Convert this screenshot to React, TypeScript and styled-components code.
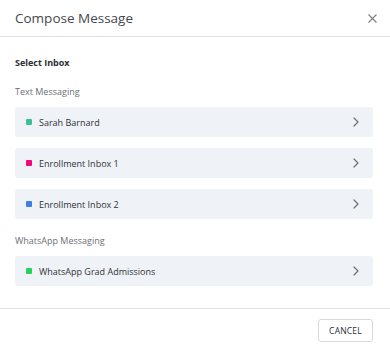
import React from "react";
import styled, { createGlobalStyle } from "styled-components";

const Global = createGlobalStyle`
  html, body { margin: 0; padding: 0; background: #fff; }
  body { font-family: "Open Sans", "Noto Sans", Arial, sans-serif; }
  * { box-sizing: border-box; }
`;

const Dialog = styled.div`
  width: 390px;
  height: 350px;
  background: #fff;
  display: flex;
  flex-direction: column;
`;

const Header = styled.div`
  height: 37px;
  border-bottom: 1px solid #dcdfe3;
  display: flex;
  align-items: center;
  justify-content: space-between;
  padding: 0 13px 0 15px;
`;

const Title = styled.h1`
  margin: 0;
  font-size: 13.5px;
  font-weight: 400;
  color: #45484d;
  line-height: 20px;
`;

const CloseButton = styled.button`
  border: 0;
  background: transparent;
  padding: 0;
  width: 10px;
  height: 10px;
  display: flex;
  align-items: center;
  justify-content: center;
  cursor: pointer;
`;

const Body = styled.div`
  padding: 19px 17px 22px 15px;
  display: flex;
  flex-direction: column;
  border-bottom: 1px solid #dcdfe3;
`;

const Heading = styled.div`
  font-size: 9px;
  font-weight: 700;
  color: #2b2e33;
  line-height: 14px;
`;

const GroupLabel = styled.div`
  font-size: 9px;
  color: #6b6f75;
  line-height: 14px;
  margin-top: 15px;
  margin-bottom: 8px;
`;

const List = styled.div`
  display: flex;
  flex-direction: column;
  gap: 11px;
`;

const Row = styled.div`
  height: 30px;
  background: #eff2f7;
  border-radius: 3px;
  display: flex;
  align-items: center;
  padding: 0 14px 0 11px;
  cursor: pointer;
`;

const Dot = styled.span<{ $color: string }>`
  width: 6px;
  height: 6px;
  border-radius: 1px;
  background: ${(p) => p.$color};
  margin-right: 7px;
  flex: none;
`;

const RowText = styled.span`
  font-size: 9px;
  color: #2f3237;
  flex: 1;
`;

const Footer = styled.div`
  display: flex;
  justify-content: flex-end;
  padding: 10px 17px 0 15px;
`;

const CancelButton = styled.button`
  height: 23px;
  width: 55px;
  background: #fff;
  border: 1px solid #d6d9de;
  border-radius: 3px;
  font-family: "Open Sans", sans-serif;
  font-size: 8.5px;
  color: #2b2e33;
  letter-spacing: 0.2px;
  padding: 0;
`;

const Chevron = () => (
  <svg width="6" height="10" viewBox="0 0 6 10" fill="none">
    <path d="M1 1l4 4-4 4" stroke="#6d7076" strokeWidth="1.2" strokeLinecap="round" strokeLinejoin="round" />
  </svg>
);

const groups = [
  {
    label: "Text Messaging",
    items: [
      { name: "Sarah Barnard", color: "#3cbf91" },
      { name: "Enrollment Inbox 1", color: "#f5067c" },
      { name: "Enrollment Inbox 2", color: "#3d7ee0" },
    ],
  },
  {
    label: "WhatsApp Messaging",
    items: [{ name: "WhatsApp Grad Admissions", color: "#27d15e" }],
  },
];

export default function App() {
  return (
    <>
      <Global />
      <Dialog>
        <Header>
          <Title>Compose Message</Title>
          <CloseButton aria-label="Close">
            <svg width="9" height="9" viewBox="0 0 9 9">
              <path d="M0.5 0.5l8 8M8.5 0.5l-8 8" stroke="#7a7d82" strokeWidth="1.1" />
            </svg>
          </CloseButton>
        </Header>
        <Body>
          <Heading>Select Inbox</Heading>
          {groups.map((g) => (
            <React.Fragment key={g.label}>
              <GroupLabel>{g.label}</GroupLabel>
              <List>
                {g.items.map((it) => (
                  <Row key={it.name}>
                    <Dot $color={it.color} />
                    <RowText>{it.name}</RowText>
                    <Chevron />
                  </Row>
                ))}
              </List>
            </React.Fragment>
          ))}
        </Body>
        <Footer>
          <CancelButton>CANCEL</CancelButton>
        </Footer>
      </Dialog>
    </>
  );
}
